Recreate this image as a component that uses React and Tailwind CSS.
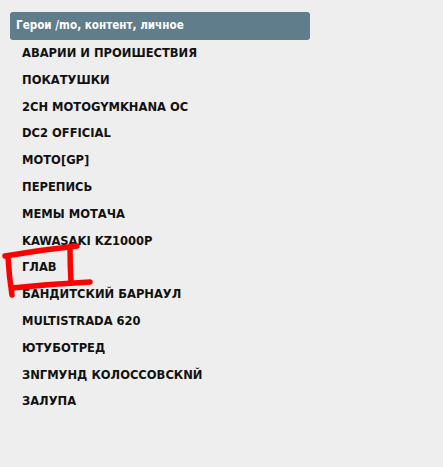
const items = [
  "АВАРИИ И ПРОИШЕСТВИЯ",
  "ПОКАТУШКИ",
  "2CH MOTOGYMKHANA OC",
  "DC2 OFFICIAL",
  "MOTO[GP]",
  "ПЕРЕПИСЬ",
  "МЕМЫ МОТАЧА",
  "KAWASAKI KZ1000P",
  "ГЛАВ",
  "БАНДИТСКИЙ БАРНАУЛ",
  "MULTISTRADA 620",
  "ЮТУБОТРЕД",
  "ЗNГМУНД КОЛОССОВСКNЙ",
  "ЗАЛУПА",
];

const App = () => {
  return (
    <div className="relative min-h-[467px] w-full bg-[#eeeeee] pt-3 pl-[10px] font-['DejaVu_Sans_Condensed','DejaVu_Sans',sans-serif]">
      {/* header */}
      <div className="w-[300px] h-7 rounded-[3px] bg-[#607d8b] pl-[6px] flex items-center">
        <span className="text-[11.6px] font-bold text-white">
          Герои /mo, контент, личное
        </span>
      </div>

      {/* list */}
      <ul className="pl-3">
        {items.map((item) => (
          <li
            key={item}
            className="text-[12.8px] font-bold leading-[26.8px] text-[#111111]"
          >
            {item}
          </li>
        ))}
      </ul>

      {/* red marker scribble */}
      <svg
        className="absolute left-0 top-0 pointer-events-none"
        width="120"
        height="320"
        viewBox="0 0 120 320"
      >
        <g stroke="#ff0000" strokeWidth="5.5" strokeLinecap="round" fill="none">
          <path d="M5 256 Q40 250 77 246" />
          <path d="M8 257 Q9 276 12 295" />
          <path d="M70 248 Q70 265 71 282" />
          <path d="M12 288 Q50 284 90 282" />
        </g>
      </svg>
    </div>
  );
};

export default App;
